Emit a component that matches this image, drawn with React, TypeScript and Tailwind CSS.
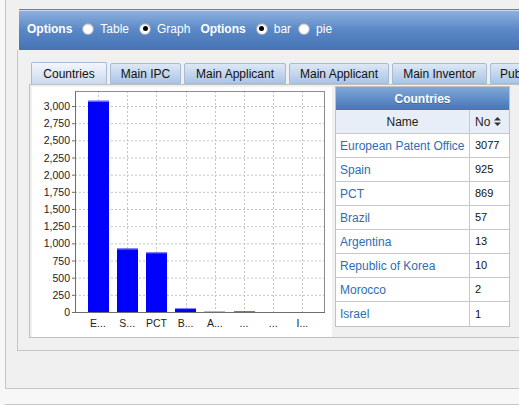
import React from "react";

const tabs = [
  { name: "Countries", cls: "w-[76px] justify-center" },
  { name: "Main IPC", cls: "w-[71px] justify-center" },
  { name: "Main Applicant", cls: "w-[102px] justify-center" },
  { name: "Main Applicant", cls: "w-[100px] justify-center" },
  { name: "Main Inventor", cls: "w-[95px] justify-center" },
  { name: "Publication", cls: "w-[90px] justify-start pl-[9px]" },
];

const rows = [
  { name: "European Patent Office", short: "E...", no: 3077 },
  { name: "Spain", short: "S...", no: 925 },
  { name: "PCT", short: "PCT", no: 869 },
  { name: "Brazil", short: "B...", no: 57 },
  { name: "Argentina", short: "A...", no: 13 },
  { name: "Republic of Korea", short: "...", no: 10 },
  { name: "Morocco", short: "...", no: 2 },
  { name: "Israel", short: "I...", no: 1 },
];

const ticks = [0, 250, 500, 750, 1000, 1250, 1500, 1750, 2000, 2250, 2500, 2750, 3000];

// plot geometry (svg coords)
const PL = 43;
const PR = 292;
const PT = 4;
const PB = 225;
const yOf = (v: number) => PB - (v * 206) / 3000;
const cx = (i: number) => 66 + i * 29.2;

const Radio = ({ checked }: { checked?: boolean }) => (
  <span className="inline-flex w-[12px] h-[12px] rounded-full bg-white border border-[#9aa7b8] items-center justify-center shadow-[inset_0_1px_1px_rgba(0,0,0,0.15)]">
    {checked && <span className="w-[5px] h-[5px] rounded-full bg-black" />}
  </span>
);

const Chart = () => (
  <svg width="300" height="250" className="block">
    <rect x="0" y="0" width="300" height="250" fill="#ffffff" />
    {/* grid */}
    {ticks.map((t) => (
      <line key={"h" + t} x1={PL} x2={PR} y1={yOf(t) + 0.5} y2={yOf(t) + 0.5} stroke="#c4c4c4" strokeDasharray="2 2" />
    ))}
    {rows.map((r, i) => (
      <line key={"v" + i} x1={Math.round(cx(i)) + 0.5} x2={Math.round(cx(i)) + 0.5} y1={PT} y2={PB} stroke="#c4c4c4" strokeDasharray="2 2" />
    ))}
    {/* bars */}
    {rows.map((r, i) => {
      const h = (r.no * 206) / 3000;
      if (h < 0.5) return null;
      const x = Math.round(cx(i) - 10.5);
      const y = PB - h;
      return (
        <g key={"b" + i}>
          <rect x={x} y={y} width={21} height={h} fill={h < 1 ? "#3030c0" : "#0000ff"} />
          {h > 2 && <line x1={x} x2={x + 21} y1={y + 0.5} y2={y + 0.5} stroke="#8f8fff" />}
          {h < 1.2 && h > 0.8 && <rect x={x} y={PB - 1} width={21} height={1} fill="#b8b8c8" />}
        </g>
      );
    })}
    {/* frame */}
    <rect x={PL + 0.5} y={PT + 0.5} width={PR - PL} height={PB - PT} fill="none" stroke="#8c8c8c" />
    <line x1={PL + 0.5} x2={PL + 0.5} y1={PT} y2={PB + 1} stroke="#6e6e6e" />
    <line x1={PL} x2={PR + 1} y1={PB + 0.5} y2={PB + 0.5} stroke="#6e6e6e" />
    {/* ticks + labels */}
    {ticks.map((t) => (
      <g key={"t" + t}>
        <line x1={PL - 3} x2={PL} y1={yOf(t) + 0.5} y2={yOf(t) + 0.5} stroke="#6e6e6e" />
        <text x={PL - 5} y={yOf(t) + 4} textAnchor="end" fontSize="10.5" fill="#222" fontFamily="Liberation Sans, Arial, sans-serif">
          {t.toLocaleString("en-US")}
        </text>
      </g>
    ))}
    {rows.map((r, i) => (
      <text key={"c" + i} x={cx(i)} y={240} textAnchor="middle" fontSize="10.5" fill="#222" fontFamily="Liberation Sans, Arial, sans-serif">
        {r.short}
      </text>
    ))}
  </svg>
);

const SortIcon = () => (
  <svg width="7" height="9" viewBox="0 0 7 9" className="inline-block ml-[4px]">
    <path d="M3.5 0 L7 3.5 L0 3.5 Z" fill="#333" />
    <path d="M3.5 9 L7 5.5 L0 5.5 Z" fill="#333" />
  </svg>
);

export default function App() {
  return (
    <div className="w-[519px] h-[405px] overflow-hidden bg-[#f7f7f7] font-['Liberation_Sans',Arial,sans-serif]">
      <div className="ml-[5px] w-[640px] h-[389px] border-l border-b border-[#c6c6c6] bg-[#f0f0f0] pt-[9px]">
        {/* options bar */}
        <div className="ml-[13px] h-[41px] border-t border-[#5b82b8] bg-gradient-to-b from-[#8fb3de] via-[#5a87c5] to-[#4673b5] flex items-center pl-[8px] gap-[6px] text-[12px] text-white pb-[3px] shadow-[inset_0_1px_0_#c9d9ee]">
          <span className="font-bold mr-[4px]">Options</span>
          <Radio />
          <span className="mr-[4px]">Table</span>
          <Radio checked />
          <span className="mr-[4px]">Graph</span>
          <span className="font-bold mr-[4px]">Options</span>
          <Radio checked />
          <span className="mr-[1px]">bar</span>
          <Radio />
          <span>pie</span>
        </div>

        {/* tab panel */}
        <div className="ml-[11px] h-[301px] border-l border-b border-[#c6c6c6] pt-[13px] pl-[11px]">
          <div className="flex gap-[3px] pl-[2px] h-[21px] items-end">
            {tabs.map((t, i) => (
              <div
                key={i}
                className={
                  (i === 0
                    ? "h-[22px] border-b-0 bg-gradient-to-b from-[#f3f6fa] to-[#cbdaee] relative z-10 "
                    : "h-[21px] bg-gradient-to-b from-[#dde8f5] to-[#abc5e6] ") +
                  "shrink-0 border border-[#a7bbd6] text-[12px] text-[#111] flex items-center rounded-t-[2px] whitespace-nowrap " +
                  t.cls
                }
              >
                {t.name}
              </div>
            ))}
          </div>
          <div className="h-[254px] border-l border-b border-t border-[#bfbfbf] flex items-start pl-[2px] pt-[2px]">
            <Chart />
            <div className="ml-[3px] -mt-[1px] w-[175px] shrink-0 border border-[#c2c2c2] bg-white text-[12px]">
              <div className="h-[23px] bg-gradient-to-b from-[#80a8d8] to-[#4674b6] text-white font-bold flex items-center justify-center [text-shadow:0_1px_0_rgba(0,0,0,0.25)]">
                Countries
              </div>
              <div className="flex h-[24px] bg-[#e8eef7] border-b border-[#c8c8c8] text-[#222]">
                <div className="w-[134px] flex items-center justify-center border-r border-[#c8c8c8]">Name</div>
                <div className="flex-1 flex items-center pl-[5px]">
                  No
                  <SortIcon />
                </div>
              </div>
              {rows.map((r, i) => (
                <div key={i} className={"flex h-[24px] " + (i < rows.length - 1 ? "border-b border-[#c8c8c8]" : "")}>
                  <div className="w-[134px] flex items-center pl-[4px] border-r border-[#c8c8c8] text-[#2e6db4] whitespace-nowrap">
                    {r.name}
                  </div>
                  <div className="flex-1 flex items-center pl-[5px] text-[11px] text-[#111]">{r.no}</div>
                </div>
              ))}
            </div>
          </div>
        </div>
      </div>
      <div className="ml-[5px] mt-[15px] border-t border-[#c6c6c6]" />
    </div>
  );
}
